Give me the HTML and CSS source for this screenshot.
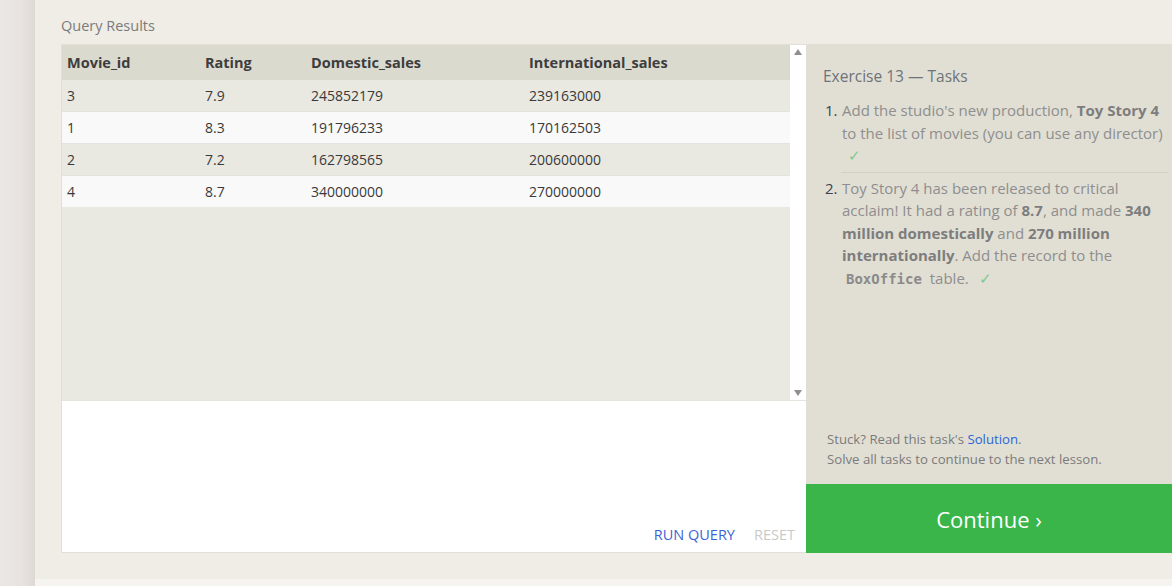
FILE: index.html
```html
<!DOCTYPE html>
<html>
<head>
<meta charset="utf-8">
<link rel="stylesheet" href="styles.css">
</head>
<body>
<div class="page">
  <div class="side"></div>
  <div class="main">
    <div class="content">
      <div class="label">Query Results</div>
      <div class="row">
        <div class="widget">
          <div class="results">
            <div class="table-wrap">
              <table class="tbl">
                <thead>
                  <tr><th class="c1">Movie_id</th><th class="c2">Rating</th><th class="c3">Domestic_sales</th><th class="c4">International_sales</th></tr>
                </thead>
                <tbody>
                  <tr class="odd"><td>3</td><td>7.9</td><td>245852179</td><td>239163000</td></tr>
                  <tr class="even"><td>1</td><td>8.3</td><td>191796233</td><td>170162503</td></tr>
                  <tr class="odd"><td>2</td><td>7.2</td><td>162798565</td><td>200600000</td></tr>
                  <tr class="even"><td>4</td><td>8.7</td><td>340000000</td><td>270000000</td></tr>
                </tbody>
              </table>
            </div>
            <div class="scrollbar">
              <span class="arrow up"></span>
              <span class="arrow down"></span>
            </div>
          </div>
          <div class="editor">
            <div class="actions">
              <span class="run">RUN QUERY</span>
              <span class="reset">RESET</span>
            </div>
          </div>
        </div>
        <div class="tasks">
          <div class="tasks-body">
            <div class="tasks-title">Exercise 13 — Tasks</div>
            <ol class="task-list">
              <li class="task"><span class="num">1.</span><div class="ttext">Add the studio's new production, <b>Toy Story 4</b> to the list of movies (you can use any director) <span class="check">✓</span></div></li>
              <li class="task"><span class="num">2.</span><div class="ttext">Toy Story 4 has been released to critical acclaim! It had a rating of <b>8.7</b>, and made <b>340 million domestically</b> and <b>270 million internationally</b>. Add the record to the <code>BoxOffice</code> table. <span class="check">✓</span></div></li>
            </ol>
            <div class="stuck">Stuck? Read this task's <span class="link">Solution</span>.<br>Solve all tasks to continue to the next lesson.</div>
          </div>
          <div class="continue">Continue ›</div>
        </div>
      </div>
    </div>
    <div class="footer"></div>
  </div>
</div>
</body>
</html>
```

FILE: styles.css
```css
html, body {
  margin: 0;
  padding: 0;
}
body {
  font-family: "Open Sans", "Liberation Sans", sans-serif;
  background: #f5f4f0;
  width: 1172px;
  height: 586px;
  overflow: hidden;
}
.page {
  display: flex;
  height: 586px;
}
.side {
  width: 35px;
  flex: none;
  background: linear-gradient(to right, #ebe7e4 0%, #e8e3e0 60%, #ded9d5 100%);
}
.main {
  flex: 1;
  display: flex;
  flex-direction: column;
}
.content {
  background: #efede6;
  height: 579px;
  padding-left: 26px;
  box-sizing: border-box;
}
.footer {
  flex: 1;
  background: #f5f4f0;
}
.label {
  font-size: 14.5px;
  color: #7b7b7b;
  height: 44px;
  box-sizing: border-box;
  line-height: 1;
  padding-top: 19px;
}
.row {
  display: flex;
  height: 509px;
}
.widget {
  width: 745px;
  flex: none;
  display: flex;
  flex-direction: column;
  border: 1px solid #e1dfd6;
  border-right: none;
  box-sizing: border-box;
}
.results {
  height: 355px;
  display: flex;
  background: #e9e8e1;
}
.table-wrap {
  flex: 1;
}
.scrollbar {
  width: 16px;
  background: #ffffff;
  display: flex;
  flex-direction: column;
  justify-content: space-between;
  align-items: center;
  padding: 4px 0 4px;
  box-sizing: border-box;
}
.arrow {
  width: 0;
  height: 0;
  border-left: 4.5px solid transparent;
  border-right: 4.5px solid transparent;
}
.arrow.up {
  border-bottom: 6px solid #8f8f8f;
}
.arrow.down {
  border-top: 6px solid #8f8f8f;
}
.tbl {
  width: 100%;
  border-collapse: collapse;
  font-size: 14px;
  color: #333;
}
.tbl th {
  background: #dbdacf;
  text-align: left;
  font-weight: 700;
  color: #3d3d3d;
  height: 35px;
  padding: 0 0 0 5px;
  font-size: 14.5px;
}
.tbl td {
  height: 31px;
  padding: 0 0 0 5px;
  border-bottom: 1px solid #e2e2df;
  color: #3a3a3a;
}
.c1 { width: 133px; }
.c2 { width: 101px; }
.c3 { width: 213px; }
.tbl tr.odd td { background: #e9e8e1; }
.tbl tr.even td { background: #f9f9f9; }
.tbl tbody tr:last-child td { border-bottom: none; }
.editor {
  flex: 1;
  background: #ffffff;
  border-top: 1px solid #e5e4de;
  display: flex;
  align-items: flex-end;
  justify-content: flex-end;
}
.actions {
  display: flex;
  gap: 19px;
  padding: 0 11px 8px 0;
  font-size: 14.5px;
}
.run { color: #3c63d6; }
.reset { color: #c9c9c9; }
.tasks {
  flex: 1;
  display: flex;
  flex-direction: column;
  background: #e1dfd4;
  height: 509px;
}
.tasks-body {
  flex: 1;
  padding: 21px 4px 0 17px;
  display: flex;
  flex-direction: column;
}
.tasks-title {
  font-size: 15.5px;
  color: #6e737a;
  margin-bottom: 12px;
}
.task-list {
  list-style: none;
  margin: 0;
  padding: 0;
}
.task {
  display: flex;
  font-size: 15px;
  line-height: 22.5px;
  color: #8e8e8e;
}
.task + .task {
  border-top: 1px solid #d3d1c6;
  margin-left: 18px;
  padding-top: 4px;
}
.task:first-child { padding-bottom: 5px; }
.task + .task .num { margin-left: -18px; }
.num {
  width: 19px;
  flex: none;
  color: #3c4250;
  padding-left: 2px;
  box-sizing: border-box;
}
.ttext b { color: #7d7d7d; font-weight: 700; }
.ttext code {
  font-family: "DejaVu Sans Mono", "Liberation Mono", monospace;
  font-weight: 700;
  color: #8a8a8a;
  font-size: 14px;
  padding: 0 4px;
}
.check {
  color: #7dca8e;
  padding-left: 6px;
}
.stuck {
  margin-top: auto;
  padding: 0 0 15px 4px;
  font-size: 13.2px;
  line-height: 20px;
  color: #7b7b7b;
}
.link { color: #2c64d6; }
.continue {
  height: 69px;
  background: #39b54a;
  color: #ffffff;
  font-size: 22px;
  display: flex;
  align-items: center;
  justify-content: center;
}
```
